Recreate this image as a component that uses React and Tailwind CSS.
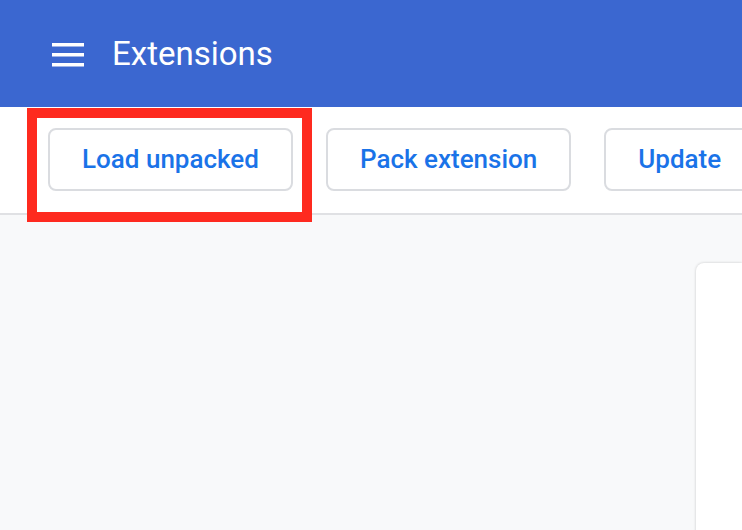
export default function App() {
  const btn =
    "shrink-0 h-[63px] rounded-[8px] border-2 border-[#dadce0] bg-white px-[32px] text-[26px] font-medium text-[#1a73e8] whitespace-nowrap";
  return (
    <div
      className="relative w-[742px] h-[530px] overflow-hidden bg-[#f8f9fa]"
      style={{ fontFamily: "Roboto, 'Liberation Sans', sans-serif" }}
    >
      <header className="h-[107px] bg-[#3b67d0] flex items-center pl-[52px] gap-[28px]">
        <svg width="32" height="24" viewBox="0 0 32 24" className="mt-[3px]">
          <rect x="0" y="0" width="32" height="3.5" fill="white" />
          <rect x="0" y="10" width="32" height="3.5" fill="white" />
          <rect x="0" y="20" width="32" height="3.5" fill="white" />
        </svg>
        <h1 className="text-[33px] text-white font-normal leading-none">Extensions</h1>
      </header>
      <div className="h-[108px] bg-white border-b-2 border-[#e0e1e4] flex items-start pt-[21px] pl-[48px] gap-[33px]">
        <button className={btn}>Load unpacked</button>
        <button className={btn}>Pack extension</button>
        <button className={btn}>Update</button>
      </div>
      <div className="flex justify-end pt-[48px]">
        <div className="w-[46px] h-[300px] bg-white rounded-tl-[8px] shadow-[0_0_3px_rgba(0,0,0,0.2)]"></div>
      </div>
      <div className="absolute left-[27px] top-[108px] w-[285px] h-[114px] border-[10px] border-[#fe2a1f]"></div>
    </div>
  );
}
